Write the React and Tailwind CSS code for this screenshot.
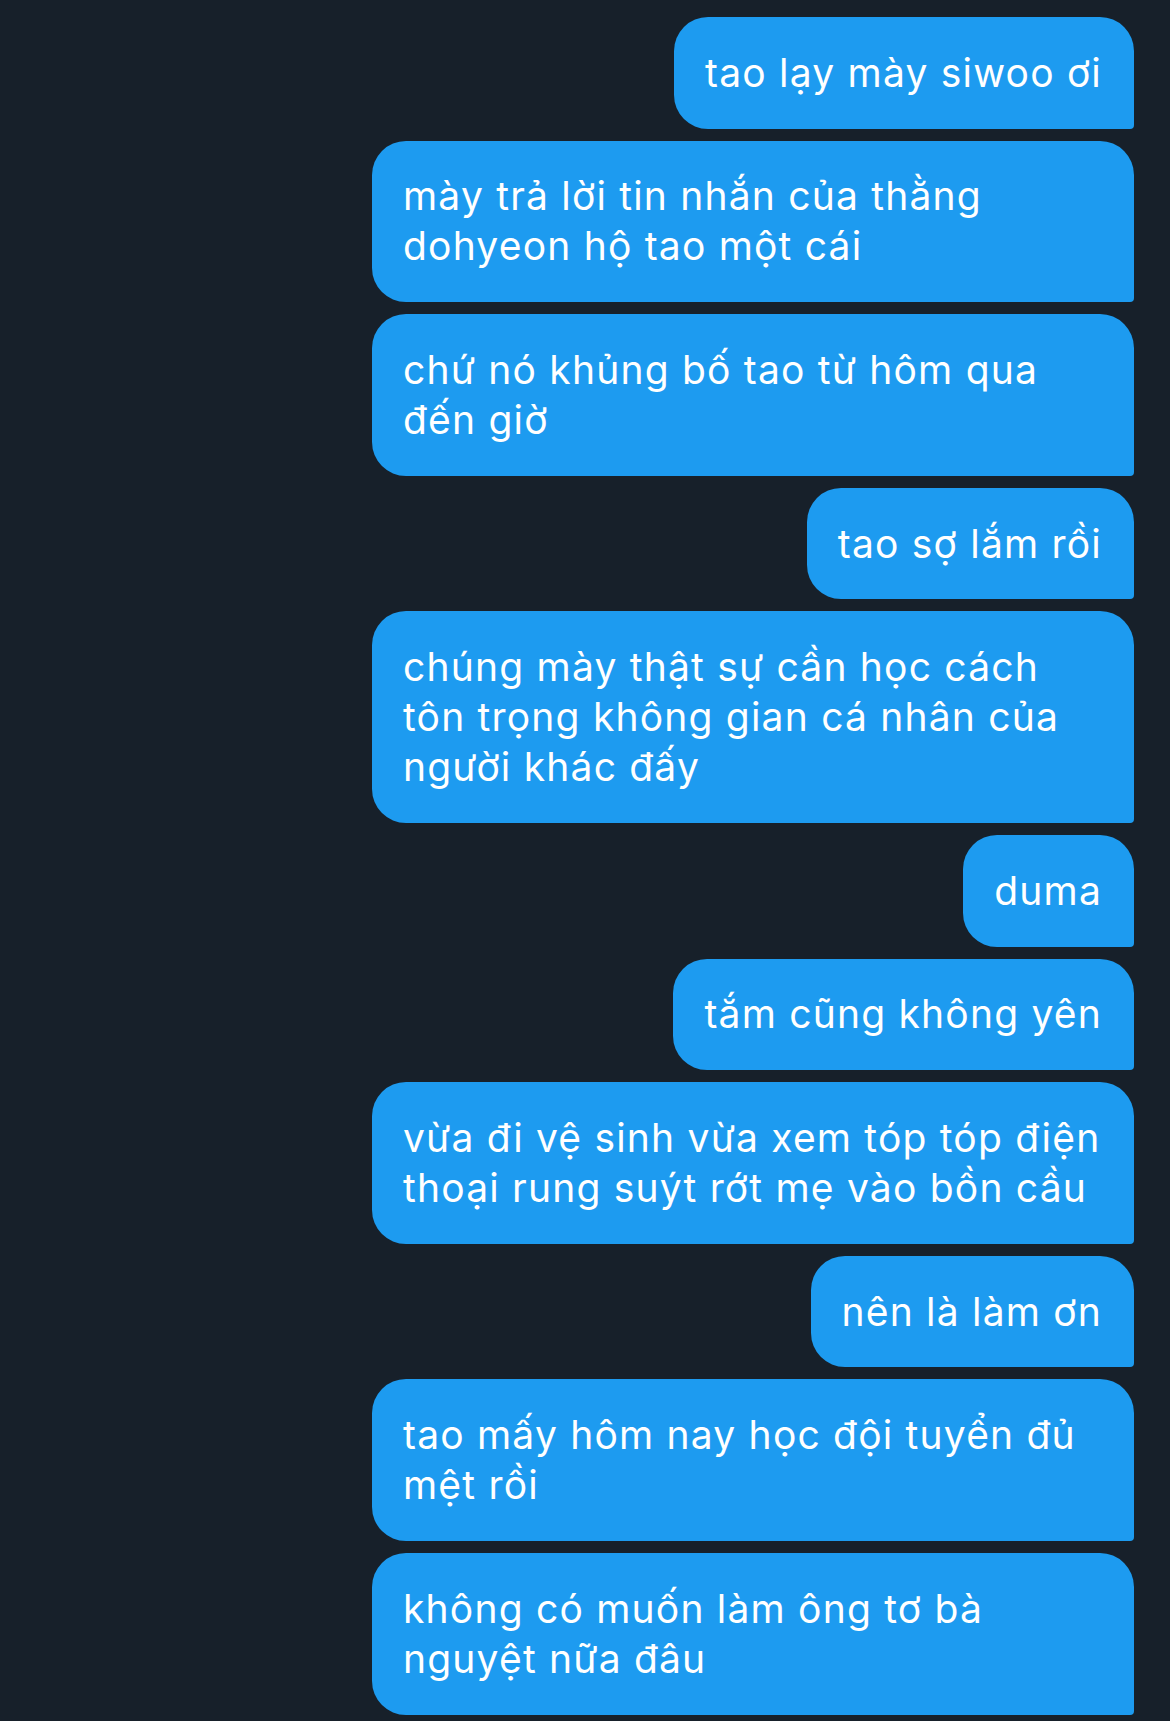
const messages = [
  ['tao lạy mày siwoo ơi'],
  ['mày trả lời tin nhắn của thằng', 'dohyeon hộ tao một cái'],
  ['chứ nó khủng bố tao từ hôm qua', 'đến giờ'],
  ['tao sợ lắm rồi'],
  ['chúng mày thật sự cần học cách', 'tôn trọng không gian cá nhân của', 'người khác đấy'],
  ['duma'],
  ['tắm cũng không yên'],
  ['vừa đi vệ sinh vừa xem tóp tóp điện', 'thoại rung suýt rớt mẹ vào bồn cầu'],
  ['nên là làm ơn'],
  ['tao mấy hôm nay học đội tuyển đủ', 'mệt rồi'],
  ['không có muốn làm ông tơ bà', 'nguyệt nữa đâu'],
];

const Bubble = ({ lines }) => {
  const wide = lines.length > 1;
  return (
    <div
      className={
        'bg-[#1d9bf0] text-white rounded-[34px] rounded-br-[4px] pl-[31px] pr-[32px] py-[30.8px] text-[39px] leading-[50px] tracking-[1.2px] whitespace-nowrap ' +
        (wide ? 'w-[762px]' : '')
      }
    >
      {lines.map((l, i) => (
        <div key={i}>{l}</div>
      ))}
    </div>
  );
};

export default function App() {
  return (
    <div
      className="min-h-[1721px] w-[1170px] bg-[#17202a] pt-[17px] pr-[36px] flex flex-col items-end gap-[12px]"
      style={{ fontFamily: 'Inter, "Noto Sans", sans-serif' }}
    >
      {messages.map((m, i) => (
        <Bubble key={i} lines={m} />
      ))}
    </div>
  );
}
